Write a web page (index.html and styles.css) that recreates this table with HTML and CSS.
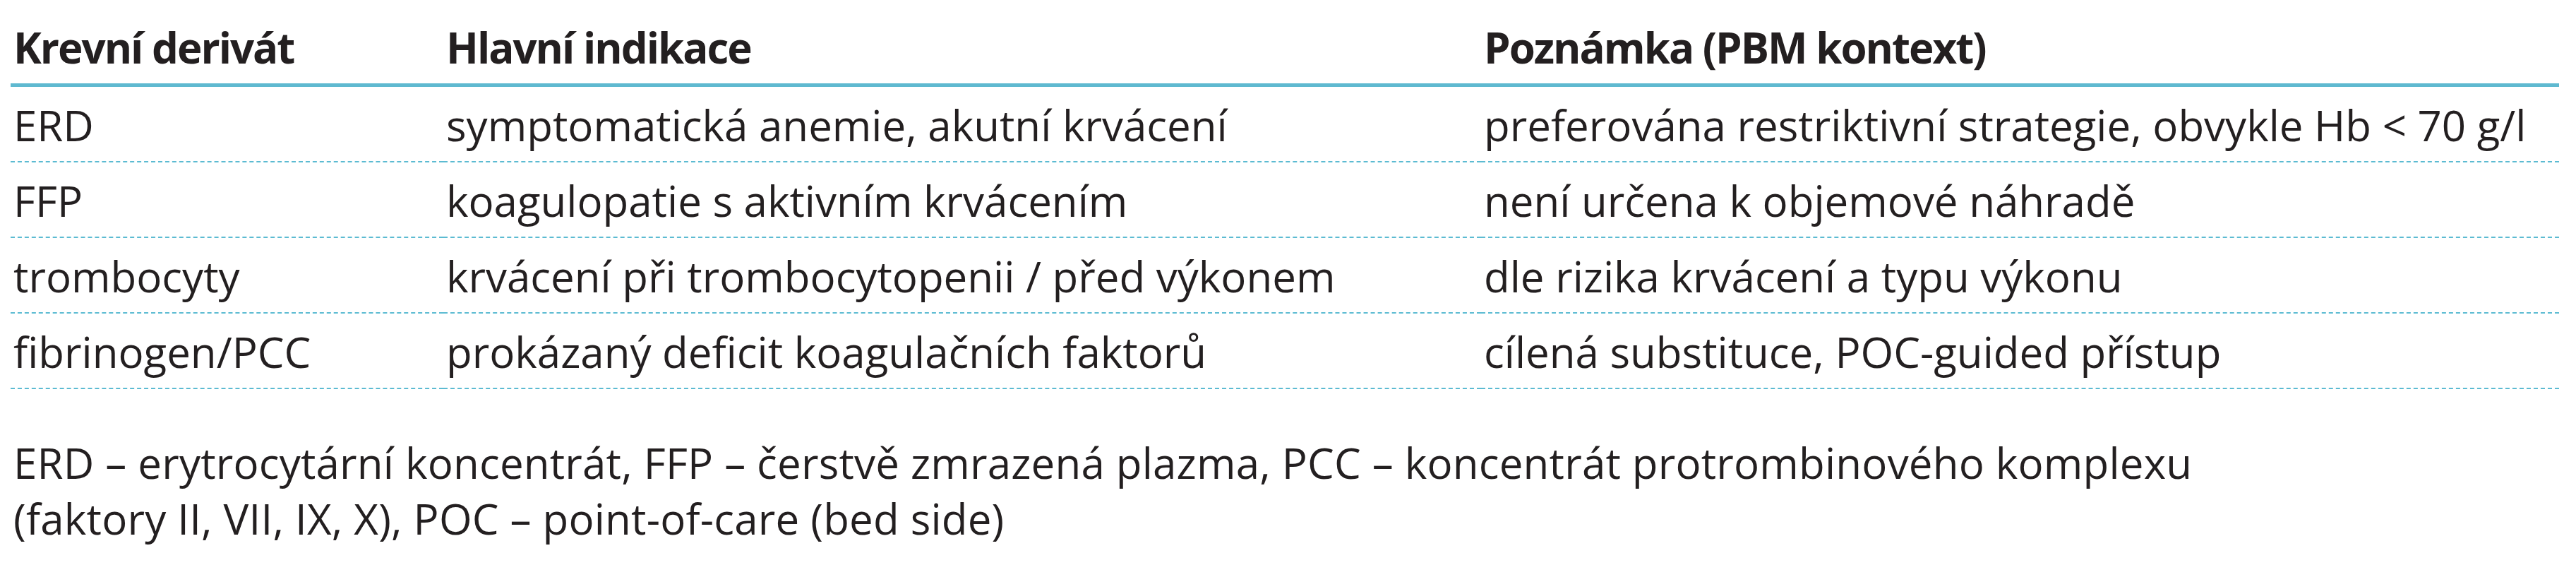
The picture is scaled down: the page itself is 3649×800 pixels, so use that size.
FILE: index.html
```html
<!DOCTYPE html>
<html lang="cs">
<head>
<meta charset="utf-8">
<title>Krevní deriváty – indikace</title>
<link rel="stylesheet" href="styles.css">
</head>
<body>
<table class="deriv-table">
  <colgroup>
    <col class="c1">
    <col class="c2">
    <col class="c3">
  </colgroup>
  <thead>
    <tr>
      <th>Krevní derivát</th>
      <th>Hlavní indikace</th>
      <th>Poznámka (PBM kontext)</th>
    </tr>
  </thead>
  <tbody>
    <tr>
      <td>ERD</td>
      <td>symptomatická anemie, akutní krvácení</td>
      <td>preferována restriktivní strategie, obvykle Hb &lt; 70 g/l</td>
    </tr>
    <tr>
      <td>FFP</td>
      <td>koagulopatie s aktivním krvácením</td>
      <td>není určena k objemové náhradě</td>
    </tr>
    <tr>
      <td>trombocyty</td>
      <td>krvácení při trombocytopenii / před výkonem</td>
      <td>dle rizika krvácení a typu výkonu</td>
    </tr>
    <tr>
      <td>fibrinogen/PCC</td>
      <td>prokázaný deficit koagulačních faktorů</td>
      <td>cílená substituce, POC-guided přístup</td>
    </tr>
  </tbody>
</table>
<p class="footnote">ERD – erytrocytární koncentrát, FFP – čerstvě zmrazená plazma, PCC – koncentrát protrombinového komplexu<br>(faktory II, VII, IX, X), POC – point-of-care (bed side)</p>
</body>
</html>
```
FILE: styles.css
```css
html, body {
  margin: 0;
  padding: 0;
  background: #ffffff;
}
body {
  padding: 0 24px 0 15px;
  font-family: "Open Sans", "Noto Sans", sans-serif;
  font-size: 60px;
  line-height: 80px;
  color: #231f20;
}
.deriv-table {
  width: 3610px;
  border-collapse: collapse;
  table-layout: fixed;
}
.c1 { width: 613px; }
.c2 { width: 1470px; }
.c3 { width: auto; }
.deriv-table th {
  text-align: left;
  font-weight: 700;
  letter-spacing: -2px;
  padding: 27px 0 11px 4px;
  border-bottom: 5px solid #5fb9d0;
  white-space: nowrap;
}
.deriv-table td {
  padding: 14px 0 11px 4px;
  border-bottom: 2px dashed #5cbbd2;
  white-space: nowrap;
  vertical-align: top;
}
.footnote {
  margin: 65px 0 0 4px;
  line-height: 79px;
  letter-spacing: 0.2px;
}
```
